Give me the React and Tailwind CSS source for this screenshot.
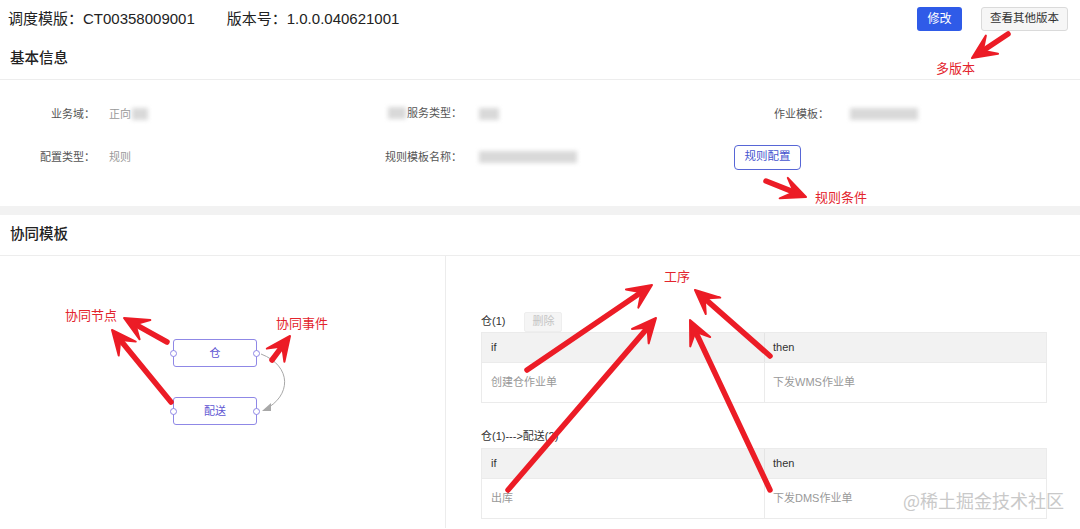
import React from "react";

const RED = "#ec1c26";

function Arrow({ x1, y1, x2, y2 }) {
  const dx = x2 - x1;
  const dy = y2 - y1;
  const len = Math.hypot(dx, dy);
  const ux = dx / len;
  const uy = dy / len;
  const px = -uy;
  const py = ux;
  const L = 24;
  const W = 11;
  const N = 13;
  const bx = x2 - ux * L;
  const by = y2 - uy * L;
  const nx = x2 - ux * N;
  const ny = y2 - uy * N;
  const pts = [
    [x2, y2],
    [bx + px * W, by + py * W],
    [nx, ny],
    [bx - px * W, by - py * W],
  ]
    .map((p) => p.join(","))
    .join(" ");
  return (
    <g>
      <line x1={x1} y1={y1} x2={nx} y2={ny} stroke={RED} strokeWidth="5.5" strokeLinecap="round" />
      <polygon points={pts} fill={RED} stroke={RED} strokeWidth="2" strokeLinejoin="round" />
    </g>
  );
}

function Blur({ w, className = "" }) {
  return <span className={`inline-block h-[12px] bg-[#d9d9d9] blur-[2px] align-middle ${className}`} style={{ width: w }} />;
}

function Field({ label, children }) {
  return (
    <div className="flex items-center h-[28px]">
      <div className="w-[95px] text-right text-[11px] text-[#555] whitespace-nowrap">{label}</div>
      <div className="pl-[14px] text-[11px] text-[#999] whitespace-nowrap flex items-center">{children}</div>
    </div>
  );
}

function Node({ top, label }) {
  return (
    <div
      className="absolute left-[173px] w-[84px] h-[28px] border border-[#8f88e6] rounded-[3px] bg-white flex items-center justify-center text-[11px] text-[#5e55d2]"
      style={{ top }}
    >
      {label}
      <span className="absolute left-[-4px] top-[10px] w-[7px] h-[7px] rounded-full border border-[#8f88e6] bg-white" />
      <span className="absolute right-[-4px] top-[10px] w-[7px] h-[7px] rounded-full border border-[#8f88e6] bg-white" />
    </div>
  );
}

function RuleTable({ ifText, thenText }) {
  return (
    <div className="border border-[#ebebeb]">
      <div className="grid grid-cols-2 h-[29px] bg-[#f2f2f2] text-[11px] text-[#333]">
        <div className="flex items-center pl-[9px]">if</div>
        <div className="flex items-center pl-[8px] border-l border-[#e4e4e4]">then</div>
      </div>
      <div className="grid grid-cols-2 h-[40px] text-[11px] text-[#999] border-t border-[#ebebeb]">
        <div className="flex items-center pl-[9px]">{ifText}</div>
        <div className="flex items-center pl-[8px] border-l border-[#ebebeb]">{thenText}</div>
      </div>
    </div>
  );
}

export default function App() {
  return (
    <div className="relative w-[1080px] h-[529px] overflow-hidden bg-white text-[#333] font-['Liberation_Sans','Noto_Sans_CJK_SC',sans-serif]">
      {/* header */}
      <div className="flex items-center h-[38px] pl-[8px] pr-[12px]">
        <span className="text-[15px] text-[#222]">调度模版：CT00358009001</span>
        <span className="text-[15px] text-[#222] ml-[32px]">版本号：1.0.0.040621001</span>
        <div className="ml-auto flex items-center gap-[19px]">
          <button className="w-[45px] h-[24px] rounded-[3px] bg-[#2f5be8] text-white text-[12px]">修改</button>
          <button className="w-[87px] h-[24px] rounded-[3px] bg-[#f6f6f6] border border-[#dadada] text-[#333] text-[11.5px]">查看其他版本</button>
        </div>
      </div>

      {/* 基本信息 */}
      <div className="h-[42px] flex items-center pl-[10px] border-b border-[#ededed]">
        <span className="text-[14.5px] font-medium text-[#222]">基本信息</span>
      </div>
      <div className="grid grid-cols-[367px_367px_1fr] gap-y-[15px] pt-[20px] pb-[35px]">
        <Field label="业务域：">
          正向<Blur w={16} className="ml-[1px]" />
        </Field>
        <Field label={<span className="inline-flex items-center justify-end"><Blur w={18} className="mr-[1px]" />服务类型：</span>}>
          <Blur w={20} className="ml-[3px]" />
        </Field>
        <Field label="作业模板：">
          <Blur w={68} className="ml-[7px]" />
        </Field>
        <Field label="配置类型：">规则</Field>
        <Field label="规则模板名称：">
          <Blur w={98} className="ml-[3px]" />
        </Field>
        <div className="flex items-center h-[28px]">
          <button className="w-[67px] h-[25px] rounded-[4px] border border-[#5766d6] text-[#4655cf] text-[11.5px] bg-white">规则配置</button>
        </div>
      </div>
      <div className="h-[9px] bg-[#f2f2f2]" />

      {/* 协同模板 */}
      <div className="h-[41px] flex items-center pl-[10px] border-b border-[#ededed]">
        <span className="text-[14.5px] font-medium text-[#222]">协同模板</span>
      </div>
      <div className="flex h-[272px]">
        <div className="relative w-[446px] border-r border-[#ececec]">
          <Node top={83} label="仓" />
          <Node top={141} label="配送" />
          <svg className="absolute left-0 top-0" width="446" height="272">
            <path d="M261 98 C 292 110, 292 140, 264 154" fill="none" stroke="#a8a8a8" strokeWidth="1" />
            <polygon points="262,155 271,147 271,155" fill="#a8a8a8" />
          </svg>
        </div>
        <div className="flex-1 pl-[35px] pr-[33px] pt-[55px]">
          <div className="flex items-center h-[21px] gap-[19px]">
            <span className="text-[11px] text-[#333]">仓(1)</span>
            <span className="w-[38px] h-[20px] flex items-center justify-center bg-[#f5f5f5] border border-[#eeeeee] rounded-[2px] text-[11px] text-[#c4c4c4]">删除</span>
          </div>
          <RuleTable ifText="创建仓作业单" thenText="下发WMS作业单" />
          <div className="flex items-center h-[23px] mt-[22px] text-[11px] text-[#333]">仓(1)---&gt;配送(2)</div>
          <RuleTable ifText="出库" thenText="下发DMS作业单" />
        </div>
      </div>

      {/* annotations overlay */}
      <svg className="absolute left-0 top-0 pointer-events-none" width="1080" height="529">
        <Arrow x1={1008} y1={34} x2={972} y2={58} />
        <Arrow x1={766} y1={181} x2={806} y2={197} />
        <Arrow x1={167} y1={342} x2={124} y2={318} />
        <Arrow x1={171} y1={402} x2={112} y2={330} />
        <Arrow x1={272} y1={360} x2={290} y2={336} />
        <Arrow x1={527} y1={370} x2={652} y2={285} />
        <Arrow x1={508} y1={490} x2={656} y2={318} />
        <Arrow x1={770} y1={490} x2={690} y2={320} />
        <Arrow x1={770} y1={356} x2={695} y2={290} />
      </svg>
      <span className="absolute left-[936px] top-[61px] text-[13px] leading-[16px] text-[#e3242d]">多版本</span>
      <span className="absolute left-[815px] top-[190px] text-[13px] leading-[16px] text-[#e3242d]">规则条件</span>
      <span className="absolute left-[65px] top-[308px] text-[13px] leading-[16px] text-[#e3242d]">协同节点</span>
      <span className="absolute left-[276px] top-[316px] text-[13px] leading-[16px] text-[#e3242d]">协同事件</span>
      <span className="absolute left-[664px] top-[269px] text-[13px] leading-[16px] text-[#e3242d]">工序</span>
      <span className="absolute left-[903px] top-[488px] text-[18px] leading-[24px] text-[#c9c9c9] font-['Noto_Sans_CJK_SC',sans-serif]">@稀土掘金技术社区</span>
    </div>
  );
}
